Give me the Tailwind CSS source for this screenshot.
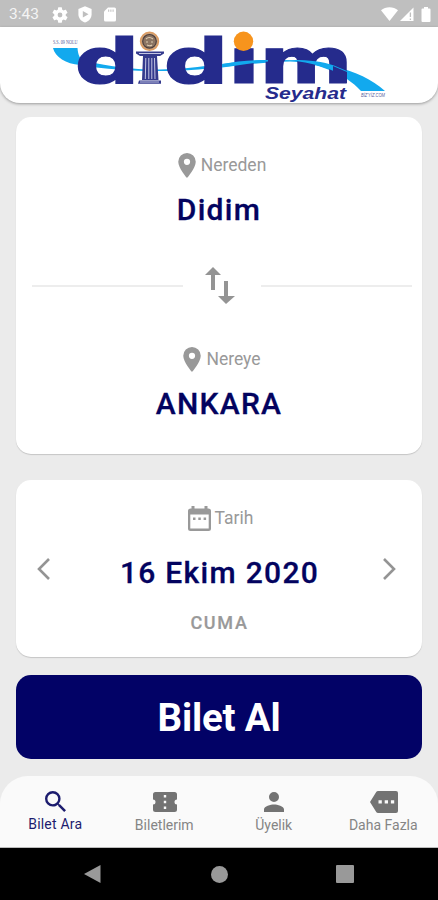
<!DOCTYPE html>
<html lang="tr">
<head>
    <meta charset="UTF-8">
    <meta name="viewport" content="width=device-width, initial-scale=1.0">
    <title>Didim Seyahat</title>
    <script src="https://cdn.jsdelivr.net/npm/@tailwindcss/browser@4"></script>
</head>
<body class="bg-[#ebebeb] font-['Roboto',sans-serif]">
    <div class="w-[438px] h-[900px] flex flex-col overflow-hidden">
        <!-- status bar -->
        <div class="h-[27px] shrink-0 bg-[#bfbfbf] flex items-center pl-[9px] pr-[7px] text-white">
            <span class="text-[15.5px] leading-none w-[43px] pt-[2px] text-[#f4f4f4]">3:43</span>
            <svg class="w-4 h-4 mt-[2px]" viewBox="2 2 20 20" fill="currentColor"><path d="M19.14 12.94c.04-.3.06-.61.06-.94s-.02-.64-.07-.94l2.03-1.58a.49.49 0 0 0 .12-.61l-1.92-3.32a.49.49 0 0 0-.59-.22l-2.39.96a7 7 0 0 0-1.62-.94l-.36-2.54A.48.48 0 0 0 13.92 2.4h-3.84a.47.47 0 0 0-.47.41l-.36 2.54c-.59.24-1.13.57-1.62.94l-2.39-.96a.47.47 0 0 0-.59.22L2.74 8.87a.47.47 0 0 0 .12.61l2.03 1.58a7 7 0 0 0 0 1.88l-2.03 1.58a.49.49 0 0 0-.12.61l1.92 3.32c.12.22.37.29.59.22l2.39-.96c.5.38 1.03.7 1.62.94l.36 2.54c.05.24.24.41.48.41h3.84c.24 0 .44-.17.47-.41l.36-2.54a7 7 0 0 0 1.62-.94l2.39.96c.22.08.47 0 .59-.22l1.92-3.32a.47.47 0 0 0-.12-.61zM12 15a3 3 0 1 1 0-6 3 3 0 0 1 0 6z"/></svg>
            <svg class="w-[14px] h-[17px] ml-[10px] mt-[2px]" viewBox="0 0 14 17"><path fill="currentColor" d="M7 .3 13.6 3v5.2c0 3.9-2.8 7.2-6.6 8.3C3.2 15.4.4 12.1.4 8.200V3z"/><path fill="#bfbfbf" d="M4.800 5v6.400L10.500 8.200z"/></svg>
            <svg class="w-[12px] h-[15px] ml-[12px] mt-[2px]" viewBox="0 0 12 15"><path fill="currentColor" d="M4 .5h6.500a1.500 1.500 0 0 1 1.500 1.500v11a1.500 1.500 0 0 1-1.500 1.500h-9A1.500 1.500 0 0 1 0 13V4.500z"/><path stroke="#bfbfbf" d="M4.700 2.500v2.300M6.900 2.500v2.300M9.100 2.500v2.300"/></svg>
            <svg class="w-[17px] h-[14px] ml-auto mt-[1px]" viewBox="0 0 17 14"><path fill="currentColor" d="M8.500 14 0 3.200C2.400 1.200 5.300.2 8.500.2s6.100 1 8.500 3z"/></svg>
            <svg class="w-[14px] h-[14px] ml-[2px] mt-[1px]" viewBox="0 0 14 14"><path fill="currentColor" d="M0 14 13.500.5V14z"/><path stroke="#bfbfbf" stroke-width="1.300" d="M10.400 5.500v4.500M10.400 11.500v1.500"/></svg>
            <svg class="w-[10px] h-[15px] ml-[7px] mt-[1px]" viewBox="0 0 10 15"><path fill="currentColor" d="M3 0h4v1.500h1.500a1 1 0 0 1 1 1V14a1 1 0 0 1-1 1h-7a1 1 0 0 1-1-1V2.500a1 1 0 0 1 1-1H3z"/></svg>
        </div>

        <!-- logo -->
        <header class="h-[76px] shrink-0 bg-white rounded-b-[20px] shadow-[0_1px_3px_rgba(0,0,0,0.35)]">
            <svg class="w-[438px] h-[76px] overflow-visible" viewBox="0 27 438 76">
                <path fill="#12a9ee" d="M53 48H77.500C78 55 80 59 84 61 115 67 135 70 160 69.500 200 69 230 61 268 60 310 59 358 66 385 91H361C345 73 315 62 290 61.500 250 62 200 72 160 71 130 71 105 69 80 65 66 64 55 57 53 48z"/>
                <g fill="#252b8c" stroke="#252b8c" stroke-width="1.200" font-family="DejaVu Sans" font-weight="700" font-size="62.500">
                    <text x="74.500" y="83.300" textLength="65.500" lengthAdjust="spacingAndGlyphs">d</text>
                    <text x="163.500" y="83.300" textLength="65.500" lengthAdjust="spacingAndGlyphs">d</text>
                    <text x="227" y="82.500" textLength="34" lengthAdjust="spacingAndGlyphs">ı</text>
                    <text x="259" y="82.500" textLength="94" lengthAdjust="spacingAndGlyphs">m</text>
                </g>
                <!-- part of the ribbon that runs in front of the letters -->
                <path fill="#12a9ee" d="M222 64C236 61.500 250 60 268 60V61.500C250 63 236 66 222 67.500zM286 60C305 59.500 322 61 334 65.500L347 71V80C338 70 312 62 286 60z"/>
                <path fill="#252b8c" d="M333 66 347 72v11h-14z"/>
                <circle cx="243.500" cy="41.300" r="9.700" fill="#f7941d"/>
                <!-- coin and column -->
                <circle cx="149.500" cy="41.300" r="9" fill="#c9a27c" stroke="#dd9c62" stroke-width="1.400"/>
                <circle cx="149.500" cy="41.300" r="6.800" fill="#8b7462" stroke="#4b3d3c" stroke-width="1.200"/>
                <path d="M146 39q3-3 7 0M146 42h2m3 0h2M147 45q3 1.500 5 0" fill="none" stroke="#decbb0" stroke-width="1.200"/>
                <path fill="#343a8d" d="M136 51.500h28v2l-4 2.500h-20l-4-2.500zM143 56h14l1.500 24H142zM139 80.500h22v3.300h-23z"/>
                <path d="M139 53.500h22M145.800 58l-.5 21M148.800 58v21M151.800 58v21M154.500 58l.5 21M140 82h19" stroke="#c3c5e3" stroke-width="1"/>
                <text x="265" y="98.500" textLength="81" lengthAdjust="spacingAndGlyphs" fill="#252b8c" font-family="Liberation Sans" font-weight="700" font-style="italic" font-size="16.500">Seyahat</text>
                <text x="53" y="43.800" textLength="24.500" lengthAdjust="spacingAndGlyphs" fill="#565c9c" font-family="Liberation Serif" font-size="5.500">S.S. 09 NOLU</text>
                <text x="361" y="97" textLength="24" lengthAdjust="spacingAndGlyphs" fill="#565c9c" font-family="Liberation Sans" font-style="italic" font-size="4.500">BİZ'YİZ.COM</text>
            </svg>
        </header>

        <main class="flex flex-col px-4">
            <section class="mt-[14px] h-[337px] bg-white rounded-[15px] shadow-[0_1px_1px_rgba(0,0,0,0.16)] flex flex-col items-center">
                <div class="mt-[35px] pl-[6px] h-[26px] flex items-center text-[#999]">
                    <svg class="w-[18px] h-[25px]" viewBox="5 2 14 20" fill="currentColor"><path d="M12 2a7 7 0 0 0-7 7c0 5.250 7 13 7 13s7-7.750 7-13a7 7 0 0 0-7-7zm0 9.500a2.500 2.500 0 1 1 0-5 2.500 2.500 0 0 1 0 5z"/></svg>
                    <span class="ml-[5px] mt-[2px] text-[17.5px] leading-none">Nereden</span>
                </div>
                <div class="mt-[14px] text-[30px] leading-[36px] font-medium tracking-[1.3px] text-[#03035f] [-webkit-text-stroke:0.3px_#03035f]">Didim</div>
                <div class="mt-[37px] w-full h-[42px] px-4 flex items-center">
                    <div class="h-[2px] w-[151px] bg-[#ededed]"></div>
                    <svg class="w-[30px] h-[38px] ml-[22px]" viewBox="0 0 30 38" fill="#949494"><path d="M8 0 16 8h-6v15H6V8H0zM19 14h4v15h7l-9 8-8-8h6z"/></svg>
                    <div class="h-[2px] flex-1 ml-[26px] -mr-[6px] bg-[#ededed]"></div>
                </div>
                <div class="mt-[39px] pl-[6px] h-[26px] flex items-center text-[#999]">
                    <svg class="w-[18px] h-[25px]" viewBox="5 2 14 20" fill="currentColor"><path d="M12 2a7 7 0 0 0-7 7c0 5.250 7 13 7 13s7-7.750 7-13a7 7 0 0 0-7-7zm0 9.500a2.500 2.500 0 1 1 0-5 2.500 2.500 0 0 1 0 5z"/></svg>
                    <span class="ml-[5px] mt-[2px] text-[17.5px] leading-none">Nereye</span>
                </div>
                <div class="mt-[14px] text-[30px] leading-[36px] font-medium tracking-[1.3px] text-[#03035f] [-webkit-text-stroke:0.3px_#03035f]">ANKARA</div>
            </section>

            <section class="mt-[26px] h-[177px] bg-white rounded-[15px] shadow-[0_1px_1px_rgba(0,0,0,0.16)] flex items-start justify-between px-[21px]">
                <svg class="w-[13px] h-[22px] mt-[78px]" viewBox="0 0 13 22" fill="none" stroke="#949494" stroke-width="2.600"><path d="M12 1 2 11l10 10"/></svg>
                <div class="flex flex-col items-center pl-[6px]">
                    <div class="mt-[25px] pl-[2px] h-[26px] flex items-center text-[#999]">
                        <svg class="w-[23px] h-[25px]" viewBox="0 0 23 25"><path fill="currentColor" fill-rule="evenodd" d="M3.500 0h3v2.500h10V0h3v2.500h1A2.500 2.500 0 0 1 23 5v17.500a2.500 2.500 0 0 1-2.500 2.500h-18A2.500 2.500 0 0 1 0 22.500V5a2.500 2.500 0 0 1 2.500-2.500h1zM2.300 8.500v14h18.400v-14z"/><path fill="currentColor" d="M5 11.500h2.500V14H5zM10.300 11.500h2.500V14h-2.500zM15.600 11.500h2.500V14h-2.500z"/></svg>
                        <span class="ml-[4px] mt-[2px] text-[17.5px] leading-none">Tarih</span>
                    </div>
                    <div class="mt-[24px] text-[30px] leading-[36px] font-medium tracking-[1.3px] text-[#03035f] [-webkit-text-stroke:0.3px_#03035f]">16 Ekim 2020</div>
                    <div class="mt-[20px] text-[18px] leading-6 font-medium tracking-[1.7px] text-[#999] [-webkit-text-stroke:0.2px_#999]">CUMA</div>
                </div>
                <svg class="w-[13px] h-[22px] mt-[78px] mr-[5px]" viewBox="0 0 13 22" fill="none" stroke="#949494" stroke-width="2.600"><path d="M1 1l10 10L1 21"/></svg>
            </section>

            <button class="mt-[18px] h-[84px] pt-[2px] bg-[#020266] rounded-[15px] text-white text-[38.5px] tracking-[-0.2px] font-bold">Bilet Al</button>
        </main>

        <nav class="mt-auto h-[72px] shrink-0 bg-[#fafafa] border-b border-[#bbb] rounded-t-[28px] grid grid-cols-4 text-[14px] text-[#858585]">
            <div class="flex flex-col items-center text-[#1c1c6e]">
                <svg class="w-[21px] h-[21px] mt-[15px] ml-[2px]" viewBox="3 3 17.500 17.500" fill="currentColor"><path d="M15.500 14h-.79l-.28-.27A6.470 6.470 0 0 0 16 9.500 6.500 6.500 0 1 0 9.500 16c1.610 0 3.090-.59 4.230-1.570l.27.28v.79l5 4.990L20.490 19zm-6 0a4.500 4.500 0 1 1 0-9 4.500 4.500 0 0 1 0 9z"/></svg>
                <span class="mt-[3px] leading-[18px] tracking-[0.2px] ml-[1px]">Bilet Ara</span>
            </div>
            <div class="flex flex-col items-center">
                <svg class="w-[24px] h-[20px] mt-[16px] ml-[2px]" viewBox="0 0 24 20"><path fill="#737373" d="M2.500 0h19A2.500 2.500 0 0 1 24 2.500v5a2.500 2.500 0 0 0 0 5v5a2.500 2.500 0 0 1-2.500 2.500h-19A2.500 2.500 0 0 1 0 17.500v-5a2.500 2.500 0 0 0 0-5v-5A2.500 2.500 0 0 1 2.500 0z"/><path fill="#fafafa" d="M10.800 3h2.400v2.500h-2.400zM10.800 8.800h2.400v2.400h-2.400zM10.800 14.500h2.400V17h-2.400z"/></svg>
                <span class="mt-[4px] leading-[18px]">Biletlerim</span>
            </div>
            <div class="flex flex-col items-center">
                <svg class="w-[20px] h-[20px] mt-[16px] ml-[1px]" viewBox="4 4 16 16" fill="#737373"><path d="M12 12a4 4 0 1 0 0-8 4 4 0 0 0 0 8zm0 2c-2.670 0-8 1.340-8 4v2h16v-2c0-2.660-5.330-4-8-4z"/></svg>
                <span class="mt-[4px] leading-[18px]">Üyelik</span>
            </div>
            <div class="flex flex-col items-center">
                <svg class="w-[28px] h-[22px] mt-[15px] ml-[2px]" viewBox="0 0 28 22"><path fill="#737373" d="M8 0h18a2 2 0 0 1 2 2v18a2 2 0 0 1-2 2H8a2 2 0 0 1-1.600-.8L0 11 6.400.8A2 2 0 0 1 8 0z"/><path fill="#fafafa" d="M8.500 9.200h3.300v3.300H8.500zM14.700 9.200H18v3.300h-3.300zM20.900 9.200h3.300v3.300h-3.300z"/></svg>
                <span class="mt-[3px] leading-[18px]">Daha Fazla</span>
            </div>
        </nav>

        <!-- android buttons -->
        <div class="h-[52px] shrink-0 bg-black flex items-center pl-[84px] text-[#999]">
            <svg class="w-[17px] h-[18px]" viewBox="0 0 17 18" fill="currentColor"><path d="M16.500 0v18L0 9z"/></svg>
            <div class="w-[17px] h-[17px] ml-[110px] rounded-full bg-[#999]"></div>
            <div class="w-[18px] h-[18px] ml-[108px] rounded-[1px] bg-[#999]"></div>
        </div>
    </div>
</body>
</html>
